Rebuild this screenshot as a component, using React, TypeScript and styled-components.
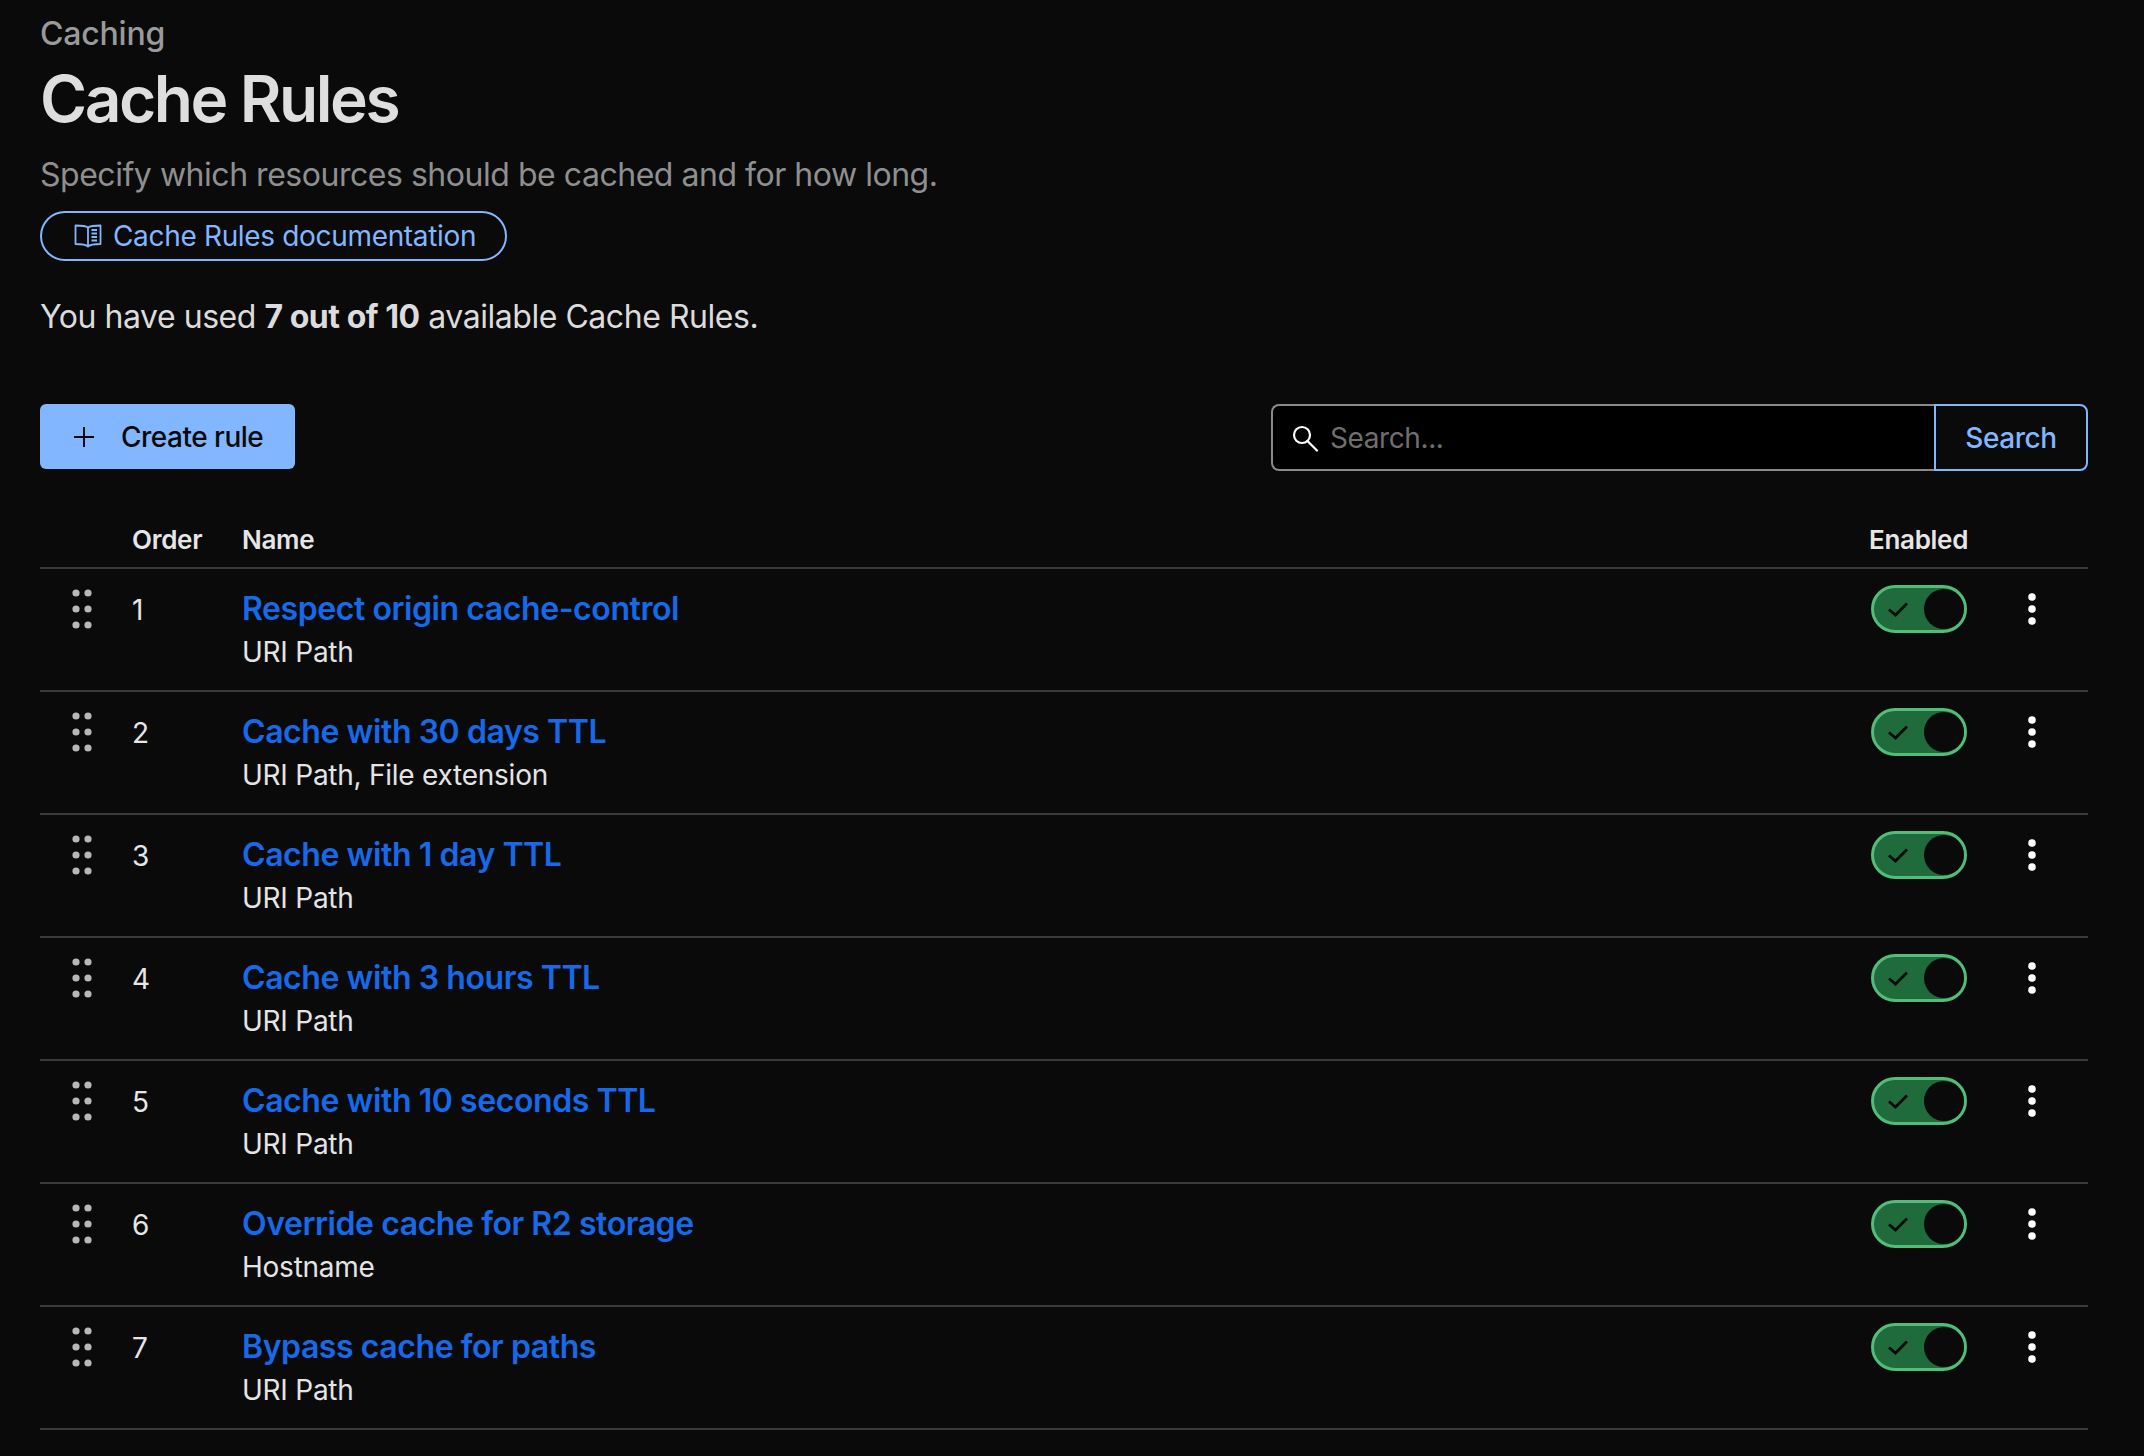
import styled, { createGlobalStyle } from "styled-components";

const rules = [
  { name: "Respect origin cache-control", fields: "URI Path" },
  { name: "Cache with 30 days TTL", fields: "URI Path, File extension" },
  { name: "Cache with 1 day TTL", fields: "URI Path" },
  { name: "Cache with 3 hours TTL", fields: "URI Path" },
  { name: "Cache with 10 seconds TTL", fields: "URI Path" },
  { name: "Override cache for R2 storage", fields: "Hostname" },
  { name: "Bypass cache for paths", fields: "URI Path" },
];

const BookIcon = () => (
  <svg width="28" height="26" viewBox="0 0 28 26" fill="none" stroke="currentColor" strokeWidth="1.8">
    <path d="M14 4.5 C12 3 9 2.5 1.5 2.5 V21 C9 21 12 21.5 14 23.5 C16 21.5 19 21 26.5 21 V2.5 C19 2.5 16 3 14 4.5 Z" strokeLinejoin="round" />
    <path d="M14 4.5 V23.5" />
    <path d="M17.5 7 H23 M17.5 10.5 H23 M17.5 14 H23 M17.5 17.5 H23" />
  </svg>
);

const SearchIcon = () => (
  <svg width="28" height="28" viewBox="0 0 28 28" fill="none" stroke="#fff" strokeWidth="2.2">
    <circle cx="11" cy="11" r="8" />
    <path d="M16.5 17 L26 26.5" strokeLinecap="round" />
  </svg>
);

const PlusIcon = () => (
  <svg width="20" height="20" viewBox="0 0 20 20" stroke="#0a0a0b" strokeWidth="2">
    <path d="M10 0 V20 M0 10 H20" />
  </svg>
);

const GripIcon = () => (
  <svg width="20" height="40" viewBox="0 0 20 40" fill="#b8b8b8">
    <circle cx="4" cy="4" r="3.6" />
    <circle cx="16" cy="4" r="3.6" />
    <circle cx="4" cy="20" r="3.6" />
    <circle cx="16" cy="20" r="3.6" />
    <circle cx="4" cy="36" r="3.6" />
    <circle cx="16" cy="36" r="3.6" />
  </svg>
);

const CheckIcon = () => (
  <svg width="20" height="15" viewBox="0 0 20 15" fill="none" stroke="#0a0a0b" strokeWidth="2.8">
    <path d="M1 7.5 L7.5 13 L19 1.5" />
  </svg>
);

const KebabIcon = () => (
  <svg width="8" height="32" viewBox="0 0 8 32" fill="#fff">
    <circle cx="4" cy="4" r="3.8" />
    <circle cx="4" cy="16" r="3.8" />
    <circle cx="4" cy="28" r="3.8" />
  </svg>
);

const App = () => {
  return (
    <Page>
      <GlobalStyle />
      <Crumb>Caching</Crumb>
      <Title>Cache Rules</Title>
      <Description>Specify which resources should be cached and for how long.</Description>
      <DocLink href="#">
        <BookIcon />
        Cache Rules documentation
      </DocLink>
      <Usage>
        You have used <strong>7 out of 10</strong> available Cache Rules.
      </Usage>

      <Toolbar>
        <CreateButton>
          <PlusIcon />
          Create rule
        </CreateButton>
        <SearchBox>
          <SearchField>
            <SearchIcon />
            <SearchInput placeholder="Search..." />
          </SearchField>
          <SearchButton>Search</SearchButton>
        </SearchBox>
      </Toolbar>

      <HeaderRow>
        <span />
        <span>Order</span>
        <span>Name</span>
        <span>Enabled</span>
        <span />
      </HeaderRow>
      {rules.map((rule, i) => (
        <Row key={rule.name}>
          <Grip>
            <GripIcon />
          </Grip>
          <OrderCell>{i + 1}</OrderCell>
          <NameCell>
            <RuleLink href="#">{rule.name}</RuleLink>
            <RuleFields>{rule.fields}</RuleFields>
          </NameCell>
          <Toggle>
            <CheckIcon />
            <Knob />
          </Toggle>
          <MenuButton>
            <KebabIcon />
          </MenuButton>
        </Row>
      ))}
    </Page>
  );
};

export default App;

const GlobalStyle = createGlobalStyle`
  html, body {
    margin: 0;
    background: #0a0a0b;
  }
  * {
    box-sizing: border-box;
  }
`;

const Page = styled.div`
  width: 2144px;
  height: 1456px;
  padding: 14px 56px 0 40px;
  overflow: hidden;
  background: #0a0a0b;
  color: #e4e4e4;
  font-family: Inter, "Liberation Sans", sans-serif;
`;

const Crumb = styled.div`
  font-size: 32px;
  line-height: 40px;
  font-weight: 500;
  letter-spacing: -0.2px;
  color: #9a9a9a;
`;

const Title = styled.h1`
  margin: 7px 0 0;
  font-size: 64px;
  line-height: 76px;
  font-weight: 600;
  letter-spacing: -2.45px;
  color: #dedede;
`;

const Description = styled.p`
  margin: 18px 0 0;
  font-size: 32px;
  line-height: 40px;
  letter-spacing: -0.47px;
  color: #8f8f8f;
`;

const DocLink = styled.a`
  display: flex;
  align-items: center;
  gap: 11px;
  width: 467px;
  height: 50px;
  margin-top: 16px;
  padding-left: 32px;
  border: 2px solid #82b6ff;
  border-radius: 25px;
  color: #82b6ff;
  font-size: 28px;
  letter-spacing: -0.33px;
  text-decoration: none;
`;

const Usage = styled.p`
  margin: 36px 0 0;
  font-size: 32px;
  line-height: 40px;
  letter-spacing: -0.46px;
  color: #dcdcdc;

  strong {
    font-weight: 700;
  }
`;

const Toolbar = styled.div`
  display: flex;
  justify-content: space-between;
  align-items: flex-start;
  margin-top: 67px;
`;

const CreateButton = styled.button`
  display: flex;
  align-items: center;
  gap: 27px;
  width: 255px;
  height: 65px;
  padding: 0 0 0 34px;
  border: 0;
  border-radius: 6px;
  background: #82b6ff;
  color: #0a0a0b;
  font: 500 28px Inter, sans-serif;
  letter-spacing: -0.5px;
`;

const SearchBox = styled.div`
  display: flex;
  width: 817px;
  height: 67px;
`;

const SearchField = styled.div`
  flex: 1;
  display: flex;
  align-items: center;
  gap: 11px;
  padding-left: 18px;
  background: #000;
  border: 2px solid #8a8a8a;
  border-right: 0;
  border-radius: 8px 0 0 8px;
`;

const SearchInput = styled.input`
  flex: 1;
  padding: 1px 0 0;
  border: 0;
  outline: 0;
  background: transparent;
  color: #dcdcdc;
  font: 400 28px Inter, sans-serif;
  letter-spacing: -0.4px;

  &::placeholder {
    color: #6f6f6f;
    opacity: 1;
  }
`;

const SearchButton = styled.button`
  width: 154px;
  padding: 0;
  border: 2px solid #82b6ff;
  border-radius: 0 8px 8px 0;
  background: #0a0a0b;
  color: #82b6ff;
  font: 500 28px Inter, sans-serif;
  letter-spacing: -0.4px;
`;

const columns = `
  display: grid;
  grid-template-columns: 92px 110px 1627px 130px 89px;
`;

const HeaderRow = styled.div`
  ${columns}
  align-items: center;
  height: 98px;
  padding-top: 40px;
  border-bottom: 2px solid #3a3a3a;
  font-size: 26px;
  font-weight: 600;
  letter-spacing: -0.3px;
  color: #e6e6e6;
`;

const Row = styled.div`
  ${columns}
  height: 123px;
  padding-top: 16px;
  border-bottom: 2px solid #3a3a3a;
`;

const Grip = styled.div`
  padding: 4px 0 0 32px;
`;

const OrderCell = styled.div`
  padding-top: 8px;
  font-size: 28px;
  line-height: 34px;
  color: #e6e6e6;
`;

const NameCell = styled.div`
  padding-top: 1px;
`;

const RuleLink = styled.a`
  display: block;
  font-size: 32px;
  line-height: 46px;
  font-weight: 600;
  letter-spacing: -0.43px;
  color: #1769e8;
  text-decoration: none;
`;

const RuleFields = styled.div`
  margin-top: 1px;
  font-size: 28px;
  line-height: 38px;
  letter-spacing: -0.25px;
  color: #e4e4e4;
`;

const Toggle = styled.div`
  display: flex;
  align-items: center;
  justify-content: space-between;
  width: 96px;
  height: 48px;
  margin-left: 2px;
  padding: 0 0 0 14px;
  border: 3px solid #52bd79;
  border-radius: 24px;
  background: #1f6b3c;
`;

const Knob = styled.span`
  width: 40px;
  height: 40px;
  border-radius: 50%;
  background: #0a0a0b;
`;

const MenuButton = styled.div`
  display: flex;
  align-items: flex-start;
  padding: 8px 0 0 29px;
`;
